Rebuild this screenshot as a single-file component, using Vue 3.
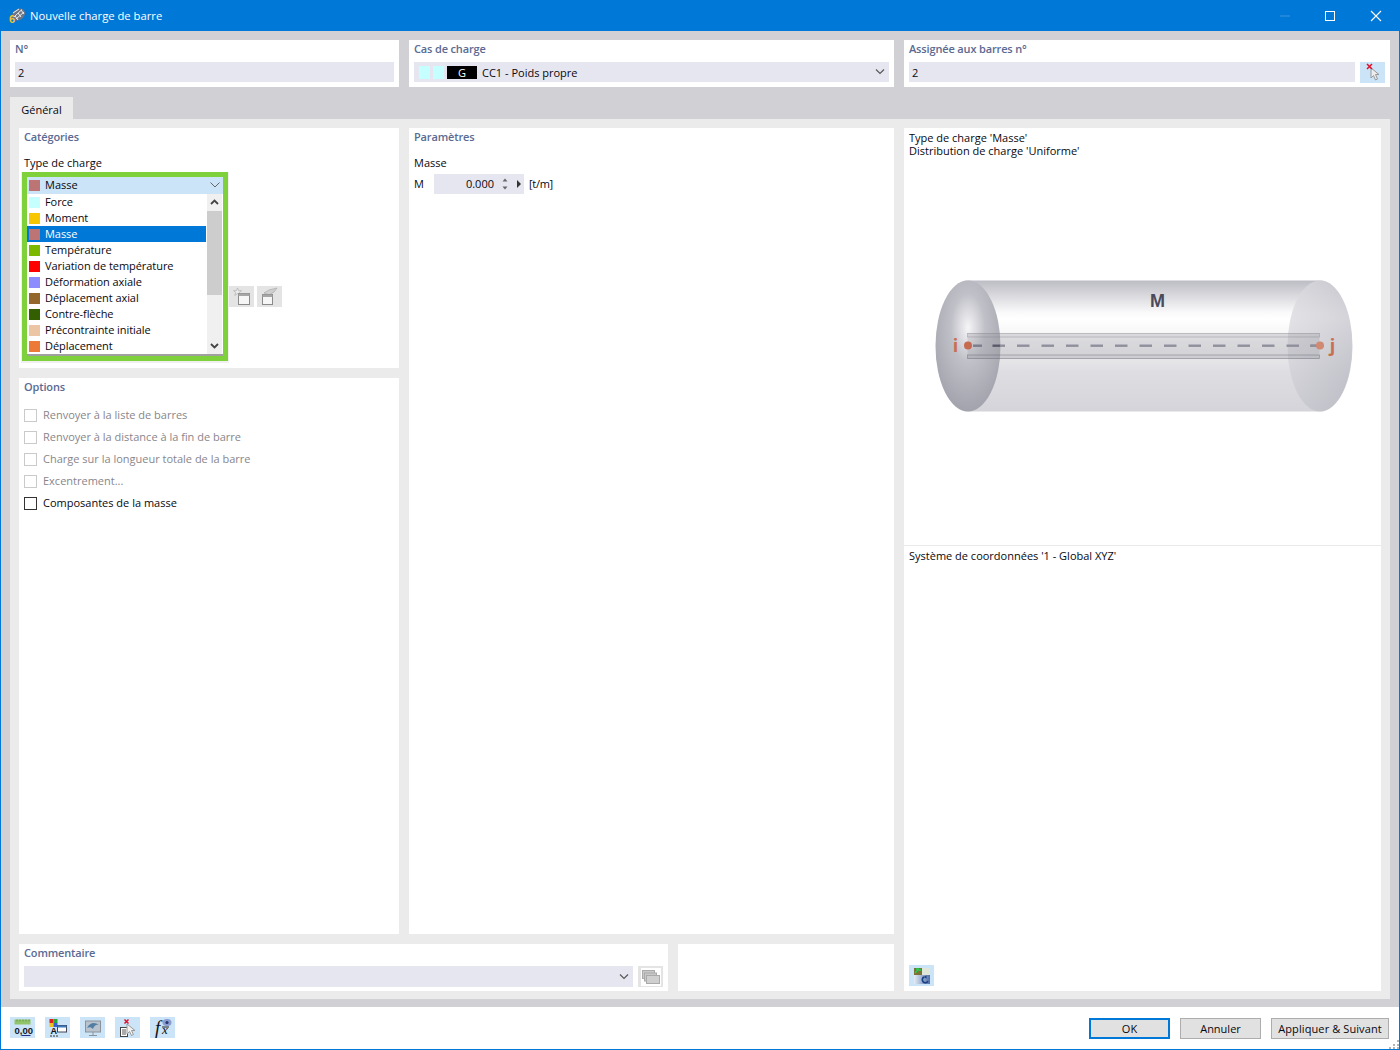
<script setup>
const topCombo = { color: '#bd7474', label: 'Masse' }
const items = [
  { color: '#c6ffff', label: 'Force' },
  { color: '#f7c600', label: 'Moment' },
  { color: '#bd7474', label: 'Masse', selected: true },
  { color: '#7cb800', label: 'Température' },
  { color: '#ff0000', label: 'Variation de température' },
  { color: '#8c8cff', label: 'Déformation axiale' },
  { color: '#94682c', label: 'Déplacement axial' },
  { color: '#335f00', label: 'Contre-flèche' },
  { color: '#ecc6a4', label: 'Précontrainte initiale' },
  { color: '#ec7a36', label: 'Déplacement' }
]
const options = [
  { label: 'Renvoyer à la liste de barres', disabled: true },
  { label: 'Renvoyer à la distance à la fin de barre', disabled: true },
  { label: 'Charge sur la longueur totale de la barre', disabled: true },
  { label: 'Excentrement...', disabled: true },
  { label: 'Composantes de la masse', disabled: false }
]
const dashes = Array.from({ length: 13 }, (_, i) => 1017 + i * 24.5)
</script>

<template>
  <div class="window">
    <header class="titlebar">
      <svg class="app-icon" width="20" height="22" viewBox="0 0 20 22">
        <g transform="translate(0 2)">
          <ellipse cx="10.500" cy="7.500" rx="7" ry="5.500" fill="#6e7684" transform="rotate(-35 10.500 7.500)" />
          <path d="M6 10 L14 2.500 M8 12 L16 5 M5 6 L11 2 M7 9 L10 13 M10 6 L13 10 M13 3 L16 7" stroke="#eceef2" stroke-width="1" />
        </g>
        <text x="1" y="17.500" class="app-six">6</text>
      </svg>
      <span class="title">Nouvelle charge de barre</span>
      <div class="win-controls">
        <svg width="16" height="16" viewBox="0 0 16 16"><path d="M3 8h10" stroke="#3f97e0" /></svg>
        <svg width="16" height="16" viewBox="0 0 16 16"><rect x="3.500" y="3.500" width="9" height="9" fill="none" stroke="#fff" /></svg>
        <svg width="16" height="16" viewBox="0 0 16 16"><path d="M3 3l10 10M13 3L3 13" stroke="#fff" stroke-width="1.100" /></svg>
      </div>
    </header>

    <main class="body">
      <section class="top-row">
        <div class="card top-card">
          <div class="heading">N°</div>
          <div class="field"><span>2</span></div>
        </div>
        <div class="card top-card">
          <div class="heading">Cas de charge</div>
          <div class="field case">
            <i class="swatch cyan"></i>
            <i class="swatch cyan"></i>
            <b class="g-tag">G</b>
            <span>CC1 - Poids propre</span>
            <svg class="chev" width="12" height="8" viewBox="0 0 12 8"><path d="M2 1.500L6 5.500l4-4" fill="none" stroke="#555" stroke-width="1.100" /></svg>
          </div>
        </div>
        <div class="card top-card">
          <div class="heading">Assignée aux barres n°</div>
          <div class="field-line">
            <div class="field grow"><span>2</span></div>
            <div class="icon-btn blue">
              <svg width="18" height="20" viewBox="0 0 18 20">
                <path d="M7 5v10l2.500-2.500 2 4.500 2-1-2-4.500h3.500z" fill="#eeeeee" stroke="#999" stroke-width="1" />
                <path d="M3 1l5 5M8 1L3 6" stroke="#e0102a" stroke-width="1.500" />
              </svg>
            </div>
          </div>
        </div>
      </section>

      <nav class="tabs"><div class="tab">Général</div></nav>

      <section class="panel">
        <div class="col-left">
          <div class="card categories">
            <div class="heading">Catégories</div>
            <div class="sub">Type de charge</div>
            <div class="side-tools">
              <div class="icon-btn grey">
                <svg width="20" height="19" viewBox="0 0 20 19">
                  <path d="M5.500 1l1.100 2.700h2.900l-2.300 1.800 1 2.900-2.700-1.700-2.700 1.700 1-2.900-2.300-1.800h2.900z" fill="#ececec" stroke="#b0b0b0" stroke-width=".7" />
                  <rect x="6.500" y="6.500" width="11" height="11" fill="#f6f6f6" stroke="#8a8a8a" />
                  <rect x="6.500" y="6.500" width="11" height="2.500" fill="#a6a6a6" />
                </svg>
              </div>
              <div class="icon-btn grey">
                <svg width="20" height="19" viewBox="0 0 20 19">
                  <path d="M4 6l5-3 8-2-3 4-5 3z" fill="#cfcfcf" stroke="#aaa" stroke-width=".7" />
                  <rect x="2.500" y="7.500" width="10" height="10" fill="#f6f6f6" stroke="#8a8a8a" />
                  <rect x="2.500" y="7.500" width="10" height="2.500" fill="#a6a6a6" />
                </svg>
              </div>
            </div>

            <div class="dropdown">
              <div class="combo">
                <i class="swatch" :style="{ background: topCombo.color }"></i>
                <span>{{ topCombo.label }}</span>
                <svg class="chev" width="12" height="8" viewBox="0 0 12 8"><path d="M1.500 1.500L6 6l4.500-4.500" fill="none" stroke="#666" stroke-width="1" /></svg>
              </div>
              <div class="listbox">
                <ul class="rows">
                  <li v-for="item in items" :key="item.label" class="row" :class="{ selected: item.selected }">
                    <i class="swatch" :style="{ background: item.color }"></i>
                    <span>{{ item.label }}</span>
                  </li>
                </ul>
                <div class="scrollbar">
                  <svg width="15" height="17" viewBox="0 0 15 17"><path d="M4 10l3.500-3.500L11 10" fill="none" stroke="#444" stroke-width="1.800" /></svg>
                  <div class="thumb"></div>
                  <div class="track"></div>
                  <svg width="15" height="16" viewBox="0 0 15 16"><path d="M4 6l3.500 3.500L11 6" fill="none" stroke="#444" stroke-width="1.800" /></svg>
                </div>
              </div>
            </div>
          </div>

          <div class="card opts">
            <div class="heading">Options</div>
            <ul class="checks">
              <li v-for="opt in options" :key="opt.label" class="check" :class="{ off: opt.disabled }">
                <i class="box"></i><span>{{ opt.label }}</span>
              </li>
            </ul>
          </div>
        </div>

        <div class="card params">
          <div class="heading">Paramètres</div>
          <div class="sub">Masse</div>
          <div class="param-line">
            <span class="m-label">M</span>
            <div class="spin">
              <span class="spin-val">0.000</span>
              <svg width="8" height="14" viewBox="0 0 8 14"><path d="M4 1.500l2.500 3h-5zM4 12.500l-2.500-3h5z" fill="#666" /></svg>
              <svg class="spin-next" width="6" height="8" viewBox="0 0 6 8"><path d="M1 0l4 4-4 4z" fill="#333" /></svg>
            </div>
            <span class="unit">[t/m]</span>
          </div>
        </div>

        <div class="card preview">
          <div class="preview-top">
            <div class="pv-text">Type de charge 'Masse'<br />Distribution de charge 'Uniforme'</div>
            <svg class="cyl" width="476" height="387" viewBox="904 159 476 387">
              <defs>
                <linearGradient id="body" x1="0" y1="0" x2="0" y2="1">
                  <stop offset="0" stop-color="#bcbcc4" />
                  <stop offset=".25" stop-color="#fbfbfc" />
                  <stop offset=".3" stop-color="#fff" />
                  <stop offset=".7" stop-color="#dedee2" />
                  <stop offset="1" stop-color="#d4d4da" />
                </linearGradient>
                <radialGradient id="capL" cx=".5" cy=".36" r=".62">
                  <stop offset="0" stop-color="#f6f6f8" />
                  <stop offset=".42" stop-color="#c0c0c8" />
                  <stop offset="1" stop-color="#a4a4ae" />
                </radialGradient>
                <linearGradient id="capR" x1="0" y1="0" x2="1" y2="1">
                  <stop offset="0" stop-color="#e0e0e4" />
                  <stop offset="1" stop-color="#b4b4be" />
                </linearGradient>
              </defs>
              <path d="M968 280.500H1320a32 65.500 0 0 1 0 131H968a32 65.500 0 0 1 0-131z" fill="url(#body)" />
              <ellipse cx="1320" cy="346" rx="32.500" ry="65.500" fill="url(#capR)" opacity=".75" />
              <ellipse cx="968" cy="346" rx="32.500" ry="65.500" fill="url(#capL)" />
              <rect x="967.500" y="333" width="352" height="26" fill="#8e8e98" fill-opacity=".24" />
              <rect x="967.500" y="333.500" width="352" height="3.500" fill="#8e8e98" fill-opacity=".04" stroke="#80808c" stroke-opacity=".5" stroke-width=".7" />
              <rect x="967.500" y="355" width="352" height="3.500" fill="#70707c" fill-opacity=".04" stroke="#60606c" stroke-opacity=".55" stroke-width=".7" />
              <rect v-for="x in dashes" :key="x" :x="x" y="344.500" width="12.500" height="2.400" fill="#8f8f9d" />
              <rect x="992.500" y="344.500" width="8" height="2.400" fill="#5a5a6c" />
              <rect x="1000.500" y="344.500" width="4.500" height="2.400" fill="#8f8f9d" />
              <rect x="973" y="344.500" width="9" height="2.400" fill="#7c7c8c" />
              <rect x="1310" y="344.500" width="7" height="2.400" fill="#8f8f9d" />
              <circle cx="968" cy="345.500" r="4" fill="#c66a50" />
              <circle cx="1320" cy="345.500" r="4" fill="#d08a72" />
              <text x="1157.500" y="307" class="cyl-m">M</text>
              <text x="955.500" y="352" class="cyl-i">i</text>
              <text x="1332.500" y="352" class="cyl-i">j</text>
            </svg>
          </div>
          <div class="preview-bottom">
            <div class="pv-text">Système de coordonnées '1 - Global XYZ'</div>
            <div class="icon-btn blue pv-btn">
              <svg width="20" height="20" viewBox="0 0 20 20">
                <defs>
                  <linearGradient id="fade" x1="0" y1="0" x2="1" y2="0">
                    <stop offset="0" stop-color="#e4ecf6" />
                    <stop offset="1" stop-color="#4f6fa8" />
                  </linearGradient>
                </defs>
                <rect x="2" y="2" width="8" height="7" fill="#7c7238" />
                <path d="M3 7l3-3h3M4 3h3" stroke="#22d04e" stroke-width="1.300" fill="none" />
                <rect x="10" y="2" width="8" height="7" fill="#dfe6d8" />
                <rect x="2" y="9" width="16" height="9" fill="url(#fade)" />
                <path d="M12 11a3 3 0 1 0 4 4" fill="none" stroke="#173f86" stroke-width="1.600" />
                <path d="M14.500 9.500l-3 1.500 3 1.500z" fill="#173f86" />
              </svg>
            </div>
          </div>
        </div>

        <div class="bottom-left">
          <div class="card comment">
            <div class="heading">Commentaire</div>
            <div class="field-line">
              <div class="field grow comment-field">
                <svg class="chev" width="12" height="8" viewBox="0 0 12 8"><path d="M2 1.500L6 5.500l4-4" fill="none" stroke="#555" stroke-width="1.100" /></svg>
              </div>
              <div class="icon-btn grey comment-btn">
                <svg width="20" height="18" viewBox="0 0 20 18">
                  <rect width="20" height="18" fill="#fff" />
                  <rect x="1.500" y="2.500" width="12" height="8" fill="#c8c8c8" stroke="#aaa" />
                  <rect x="3.500" y="5" width="12" height="8" fill="#c8c8c8" stroke="#aaa" />
                  <rect x="5.500" y="7.500" width="13" height="8" fill="#cfcfcf" stroke="#aaa" />
                </svg>
              </div>
            </div>
          </div>
          <div class="card blank"></div>
        </div>
      </section>
    </main>

    <footer class="footer">
      <div class="tools">
        <div class="icon-btn blue tool">
          <svg width="20" height="20" viewBox="0 0 20 20">
            <rect x="1.500" y="1.500" width="16" height="5" fill="#92c46c" />
            <path d="M4 1.500v2M7 1.500v2M10 1.500v2M13 1.500v2M16 1.500v2" stroke="#6a9a48" />
            <text x="1.500" y="15.500" class="tool-num">0,00</text>
            <path d="M8.500 17.500h9" stroke="#20308c" />
          </svg>
        </div>
        <div class="icon-btn blue tool">
          <svg width="22" height="20" viewBox="0 0 22 20">
            <rect x="2.500" y="1" width="4" height="4" fill="#e02020" />
            <rect x="6.500" y="1" width="4" height="4" fill="#28a838" />
            <rect x="2.500" y="5" width="4" height="4" fill="#f0c020" />
            <rect x="6.500" y="5" width="4" height="4" fill="#3060d0" />
            <text x="3.500" y="15.500" class="tool-a">A</text>
            <rect x="10.500" y="7.500" width="9" height="6.500" fill="#fff" stroke="#445" />
            <rect x="10.500" y="7.500" width="9" height="2" fill="#3a7ac0" />
            <path d="M3 18h2M6 18h2M9 18h2" stroke="#333" />
          </svg>
        </div>
        <div class="icon-btn blue tool">
          <svg width="20" height="20" viewBox="0 0 20 20">
            <rect x="2.500" y="3" width="15" height="11" fill="#b9c3cd" stroke="#8a929a" />
            <path d="M4 10c3-6 8-6 12-3-3-1-5 1-6 4-2-2-4-2-6-1z" fill="#517ea4" />
            <path d="M10 14v3M6 17.500h8" stroke="#8a929a" />
          </svg>
        </div>
        <div class="icon-btn blue tool">
          <svg width="20" height="20" viewBox="0 0 20 20">
            <rect x="2.500" y="9.500" width="7" height="9" fill="#fff" stroke="#444" />
            <path d="M4 12h4M4 14h4M4 16h4" stroke="#555" />
            <path d="M9 6v10l2.500-2.500 2 4 2-1-2-4h3.500z" fill="#f2f2f2" stroke="#999" />
            <path d="M6.500 1.500l4 4M10.500 1.500l-4 4" stroke="#e0102a" stroke-width="1.500" />
          </svg>
        </div>
        <div class="icon-btn blue tool">
          <svg width="22" height="20" viewBox="0 0 22 20">
            <text x="3" y="16" class="tool-f">f</text>
            <text x="10" y="16" class="tool-x">x</text>
            <path d="M10 9h7" stroke="#222" />
            <ellipse cx="15" cy="4.500" rx="4.500" ry="3.500" fill="#8a9cd0" />
            <circle cx="15" cy="4.500" r="1.600" fill="#26386c" />
          </svg>
        </div>
      </div>
      <div class="actions">
        <button class="btn primary" type="button">OK</button>
        <button class="btn cancel" type="button">Annuler</button>
        <button class="btn next" type="button">Appliquer &amp; Suivant</button>
      </div>
      <svg class="grip" width="10" height="10" viewBox="0 0 10 10"><path d="M8 1h2v2H8zM4 5h2v2H4zM8 5h2v2H8zM0 8h2v2H0zM4 8h2v2H4zM8 8h2v2H8z" fill="#b5b5b5" /></svg>
    </footer>
  </div>
</template>

<style>
html, body { margin: 0; background: #fff; }
</style>

<style scoped>
* { box-sizing: border-box; }
ul { list-style: none; margin: 0; padding: 0; }
i { display: block; font-style: normal; }

.window {
  width: 1400px;
  height: 1050px;
  display: flex;
  flex-direction: column;
  border: 1px solid #0078d7;
  border-top: 0;
  font: 11px/14px "Open Sans", "Noto Sans", sans-serif;
  color: #08080f;
  background: #fff;
  overflow: hidden;
}
.titlebar {
  height: 31px;
  flex: none;
  display: flex;
  align-items: center;
  padding-left: 7px;
  background: #0078d7;
  color: #fff;
}
.app-icon { margin-right: 2px; }
.app-six { font: bold 11px "Liberation Sans", sans-serif; fill: #f2c230; }
.title { font-size: 11.25px; }
.win-controls {
  margin-left: auto;
  display: flex;
  gap: 30px;
  padding-right: 15px;
}
.win-controls svg:first-child { margin-right: -1px; }

.body {
  flex: 1;
  display: flex;
  flex-direction: column;
  padding: 9px 9px 8px 9px;
  background: #d1d0d4;
  min-height: 0;
}
.card { background: #fff; }
.heading { color: #5a6a92; font-weight: 600; height: 14px; letter-spacing: -.15px; }

.top-row {
  display: grid;
  grid-template-columns: 389px 485px 486px;
  grid-template-rows: 47px;
  gap: 10px;
  flex: none;
}
.top-card { padding: 2px 5px 0; display: flex; flex-direction: column; gap: 6px; }
.field {
  height: 20px;
  display: flex;
  align-items: center;
  background: #e6e6f0;
  padding-left: 3px;
}
.field span { padding-top: 2px; }
.field-line { display: flex; gap: 5px; }
.grow { flex: 1; }
.case { padding-left: 5px; }
.swatch { width: 11px; height: 11px; flex: none; }
.cyan { background: #c6ffff; height: 13px; margin-right: 3px; }
.g-tag {
  width: 30px;
  height: 13px;
  margin-right: 5px;
  background: #000;
  color: #fff;
  font-weight: 400;
  line-height: 14px;
  text-align: center;
}
.chev { margin-left: auto; margin-right: 3px; }
.icon-btn {
  display: flex;
  align-items: center;
  justify-content: center;
  width: 25px;
  height: 21px;
  flex: none;
}
.blue { background: #cce4f7; }
.grey { background: #e4e4e4; }

.tabs { height: 32px; flex: none; padding-top: 10px; }
.tab {
  width: 63px;
  height: 22px;
  padding-top: 3px;
  background: #ebebeb;
  text-align: center;
  line-height: 20px;
}

.panel {
  flex: 1;
  min-height: 0;
  background: #ebebeb;
  padding: 9px;
  display: grid;
  grid-template-columns: 380px 485px 477px;
  grid-template-rows: 806px 47px;
  column-gap: 10px;
  row-gap: 10px;
}
.col-left {
  display: flex;
  flex-direction: column;
  gap: 10px;
}
.categories {
  height: 240px;
  padding: 2px 5px;
  position: relative;
}
.sub { margin-top: 12px; }
.side-tools {
  position: absolute;
  left: 210px;
  top: 158px;
  display: flex;
  gap: 3px;
}
.dropdown {
  position: absolute;
  left: 3px;
  top: 44px;
  width: 206px;
  height: 189px;
  border: 5px solid #7fd13b;
  background: #fff;
  box-shadow: 0 1px 0 1px #f0f0f0;
  display: flex;
  flex-direction: column;
}
.combo {
  height: 17px;
  flex: none;
  display: flex;
  align-items: center;
  gap: 5px;
  padding: 0 0 2px 2px;
  background: #cce4f7;
}
.combo .swatch { margin-top: 2px; }
.combo .chev { margin-right: 2px; }
.listbox {
  flex: 1;
  display: flex;
  min-height: 0;
  border-bottom: 2px solid #a0a0a0;
}
.rows { width: 179px; flex: none; letter-spacing: -.06px; }
.row {
  height: 16px;
  display: flex;
  align-items: center;
  gap: 5px;
  padding-left: 2px;
}
.selected { background: #0078d7; color: #fff; }
.scrollbar {
  margin-left: 1px;
  width: 15px;
  display: flex;
  flex-direction: column;
  background: #f0f0f0;
}
.scrollbar svg { flex: none; }
.thumb { height: 84px; background: #cdcdcd; flex: none; }
.track { flex: 1; }

.opts { flex: 1; padding: 2px 5px; }
.checks { margin-top: 10px; }
.check {
  height: 22px;
  display: flex;
  align-items: center;
  gap: 6px;
}
.box { width: 13px; height: 13px; background: #fff; border: 1px solid #333; }
.off { color: #88868c; }
.off .box { border-color: #cacaca; }

.params { padding: 2px 5px; }
.param-line { display: flex; align-items: center; margin-top: 4px; height: 20px; }
.m-label { width: 20px; }
.spin {
  width: 90px;
  height: 20px;
  display: flex;
  align-items: center;
  background: #e6e6f0;
}
.spin-val { width: 60px; text-align: right; margin-right: 7px; }
.spin-next { margin-left: 7px; }
.unit { margin-left: 5px; letter-spacing: -.3px; }

.preview {
  grid-column: 3;
  grid-row: 1 / span 2;
  display: flex;
  flex-direction: column;
}
.preview-top { height: 418px; border-bottom: 1px solid #e9e9ec; flex: none; }
.pv-text { padding: 3px 5px 0; line-height: 13px; height: 30px; }
.cyl { display: block; margin-top: 1px; width: 476px; height: 387px; }
.cyl-m { font: bold 18px "Liberation Sans", sans-serif; fill: #4a4a5c; text-anchor: middle; }
.cyl-i { font: bold 18px "Open Sans", sans-serif; fill: #c86e52; text-anchor: middle; }
.preview-bottom { flex: 1; display: flex; flex-direction: column; }
.pv-btn { margin: auto 0 5px 5px; }

.bottom-left {
  grid-column: 1 / span 2;
  grid-row: 2;
  display: grid;
  grid-template-columns: 649px 216px;
  column-gap: 10px;
}
.comment { padding: 2px 5px 0; display: flex; flex-direction: column; gap: 6px; }
.comment-field { height: 21px; }
.comment-btn svg { display: block; }

.footer {
  height: 42px;
  flex: none;
  display: flex;
  align-items: flex-start;
  padding: 10px 10px 0 9px;
  position: relative;
}
.tools { display: flex; gap: 10px; }
.tool { width: 25px; height: 21px; }
.tool-num { font: bold 9.500px "Liberation Sans", sans-serif; fill: #16162a; }
.tool-a { font: bold 9px "Liberation Sans", sans-serif; fill: #111; }
.tool-f { font: italic 19px "Liberation Serif", serif; fill: #111; }
.tool-x { font: italic 13px "Liberation Serif", serif; fill: #111; }
.actions { margin: 1px 0 0 auto; display: flex; gap: 10px; }
.btn {
  height: 21px;
  padding: 0;
  background: #e1e1e1;
  border: 1px solid #adadad;
  font: inherit;
  color: #08080f;
}
.primary { width: 81px; border: 2px solid #0078d7; }
.cancel { width: 81px; }
.next { width: 118px; letter-spacing: .1px; }
.grip { position: absolute; right: 0; bottom: 0; }
</style>
